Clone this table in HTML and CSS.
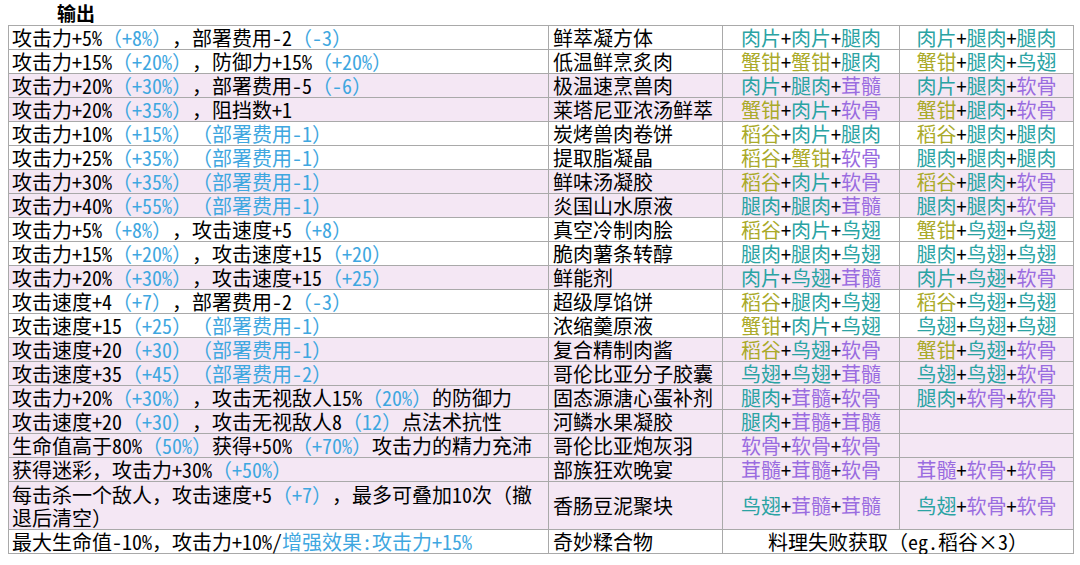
FILE: index.html
```html
<!DOCTYPE html>
<html lang="zh">
<head>
<meta charset="utf-8">
<title>输出</title>
<link rel="stylesheet" href="styles.css">
</head>
<body>
<div class="title">输出</div>
<table class="grid">
<colgroup><col class="c1"><col class="c2"><col class="c3"><col class="c4"></colgroup>
<tbody>
<tr><td class="eff">攻击力+5%<span class="b">（+8%）</span>，部署费用-2<span class="b">（-3）</span></td><td class="nm">鲜萃凝方体</td><td class="rc"><span class="t">肉片</span>+<span class="t">肉片</span>+<span class="t">腿肉</span></td><td class="rc"><span class="t">肉片</span>+<span class="t">腿肉</span>+<span class="t">腿肉</span></td></tr>
<tr><td class="eff">攻击力+15%<span class="b">（+20%）</span>，防御力+15%<span class="b">（+20%）</span></td><td class="nm">低温鲜烹炙肉</td><td class="rc"><span class="o">蟹钳</span>+<span class="o">蟹钳</span>+<span class="t">腿肉</span></td><td class="rc"><span class="o">蟹钳</span>+<span class="t">腿肉</span>+<span class="t">鸟翅</span></td></tr>
<tr class="pk"><td class="eff">攻击力+20%<span class="b">（+30%）</span>，部署费用-5<span class="b">（-6）</span></td><td class="nm">极温速烹兽肉</td><td class="rc"><span class="t">肉片</span>+<span class="t">腿肉</span>+<span class="p">茸髓</span></td><td class="rc"><span class="t">肉片</span>+<span class="t">腿肉</span>+<span class="p">软骨</span></td></tr>
<tr class="pk"><td class="eff">攻击力+20%<span class="b">（+35%）</span>，阻挡数+1</td><td class="nm">莱塔尼亚浓汤鲜萃</td><td class="rc"><span class="o">蟹钳</span>+<span class="t">肉片</span>+<span class="p">软骨</span></td><td class="rc"><span class="o">蟹钳</span>+<span class="t">腿肉</span>+<span class="p">软骨</span></td></tr>
<tr><td class="eff">攻击力+10%<span class="b">（+15%）（部署费用-1）</span></td><td class="nm">炭烤兽肉卷饼</td><td class="rc"><span class="o">稻谷</span>+<span class="t">肉片</span>+<span class="t">腿肉</span></td><td class="rc"><span class="o">稻谷</span>+<span class="t">腿肉</span>+<span class="t">腿肉</span></td></tr>
<tr><td class="eff">攻击力+25%<span class="b">（+35%）（部署费用-1）</span></td><td class="nm">提取脂凝晶</td><td class="rc"><span class="o">稻谷</span>+<span class="o">蟹钳</span>+<span class="p">软骨</span></td><td class="rc"><span class="t">腿肉</span>+<span class="t">腿肉</span>+<span class="t">腿肉</span></td></tr>
<tr class="pk"><td class="eff">攻击力+30%<span class="b">（+35%）（部署费用-1）</span></td><td class="nm">鲜味汤凝胶</td><td class="rc"><span class="o">稻谷</span>+<span class="t">肉片</span>+<span class="p">软骨</span></td><td class="rc"><span class="o">稻谷</span>+<span class="t">腿肉</span>+<span class="p">软骨</span></td></tr>
<tr class="pk"><td class="eff">攻击力+40%<span class="b">（+55%）（部署费用-1）</span></td><td class="nm">炎国山水原液</td><td class="rc"><span class="t">腿肉</span>+<span class="t">腿肉</span>+<span class="p">茸髓</span></td><td class="rc"><span class="t">腿肉</span>+<span class="t">腿肉</span>+<span class="p">软骨</span></td></tr>
<tr><td class="eff">攻击力+5%<span class="b">（+8%）</span>，攻击速度+5<span class="b">（+8）</span></td><td class="nm">真空冷制肉脍</td><td class="rc"><span class="o">稻谷</span>+<span class="t">肉片</span>+<span class="t">鸟翅</span></td><td class="rc"><span class="o">蟹钳</span>+<span class="t">鸟翅</span>+<span class="t">鸟翅</span></td></tr>
<tr><td class="eff">攻击力+15%<span class="b">（+20%）</span>，攻击速度+15<span class="b">（+20）</span></td><td class="nm">脆肉薯条转醇</td><td class="rc"><span class="t">腿肉</span>+<span class="t">腿肉</span>+<span class="t">鸟翅</span></td><td class="rc"><span class="t">腿肉</span>+<span class="t">鸟翅</span>+<span class="t">鸟翅</span></td></tr>
<tr class="pk"><td class="eff">攻击力+20%<span class="b">（+30%）</span>，攻击速度+15<span class="b">（+25）</span></td><td class="nm">鲜能剂</td><td class="rc"><span class="t">肉片</span>+<span class="t">鸟翅</span>+<span class="p">茸髓</span></td><td class="rc"><span class="t">肉片</span>+<span class="t">鸟翅</span>+<span class="p">软骨</span></td></tr>
<tr><td class="eff">攻击速度+4<span class="b">（+7）</span>，部署费用-2<span class="b">（-3）</span></td><td class="nm">超级厚馅饼</td><td class="rc"><span class="o">稻谷</span>+<span class="t">腿肉</span>+<span class="t">鸟翅</span></td><td class="rc"><span class="o">稻谷</span>+<span class="t">鸟翅</span>+<span class="t">鸟翅</span></td></tr>
<tr><td class="eff">攻击速度+15<span class="b">（+25）（部署费用-1）</span></td><td class="nm">浓缩羹原液</td><td class="rc"><span class="o">蟹钳</span>+<span class="t">肉片</span>+<span class="t">鸟翅</span></td><td class="rc"><span class="t">鸟翅</span>+<span class="t">鸟翅</span>+<span class="t">鸟翅</span></td></tr>
<tr class="pk"><td class="eff">攻击速度+20<span class="b">（+30）（部署费用-1）</span></td><td class="nm">复合精制肉酱</td><td class="rc"><span class="o">稻谷</span>+<span class="t">鸟翅</span>+<span class="p">软骨</span></td><td class="rc"><span class="o">蟹钳</span>+<span class="t">鸟翅</span>+<span class="p">软骨</span></td></tr>
<tr class="pk"><td class="eff">攻击速度+35<span class="b">（+45）（部署费用-2）</span></td><td class="nm">哥伦比亚分子胶囊</td><td class="rc"><span class="t">鸟翅</span>+<span class="t">鸟翅</span>+<span class="p">茸髓</span></td><td class="rc"><span class="t">鸟翅</span>+<span class="t">鸟翅</span>+<span class="p">软骨</span></td></tr>
<tr class="pk"><td class="eff">攻击力+20%<span class="b">（+30%）</span>，攻击无视敌人15%<span class="b">（20%）</span>的防御力</td><td class="nm">固态源溏心蛋补剂</td><td class="rc"><span class="t">腿肉</span>+<span class="p">茸髓</span>+<span class="p">软骨</span></td><td class="rc"><span class="t">腿肉</span>+<span class="p">软骨</span>+<span class="p">软骨</span></td></tr>
<tr class="pk"><td class="eff">攻击速度+20<span class="b">（+30）</span>，攻击无视敌人8<span class="b">（12）</span>点法术抗性</td><td class="nm">河鳞水果凝胶</td><td class="rc"><span class="t">腿肉</span>+<span class="p">茸髓</span>+<span class="p">茸髓</span></td><td class="rc"></td></tr>
<tr class="pk"><td class="eff">生命值高于80%<span class="b">（50%）</span>获得+50%<span class="b">（+70%）</span>攻击力的精力充沛</td><td class="nm">哥伦比亚炮灰羽</td><td class="rc"><span class="p">软骨</span>+<span class="p">软骨</span>+<span class="p">软骨</span></td><td class="rc"></td></tr>
<tr class="pk"><td class="eff">获得迷彩，攻击力+30%<span class="b">（+50%）</span></td><td class="nm">部族狂欢晚宴</td><td class="rc"><span class="p">茸髓</span>+<span class="p">茸髓</span>+<span class="p">软骨</span></td><td class="rc"><span class="p">茸髓</span>+<span class="p">软骨</span>+<span class="p">软骨</span></td></tr>
<tr class="pk tall"><td class="eff wrap">每击杀一个敌人，攻击速度+5<span class="b">（+7）</span>，最多可叠加10次（撤<br>退后清空）</td><td class="nm">香肠豆泥聚块</td><td class="rc"><span class="t">鸟翅</span>+<span class="p">茸髓</span>+<span class="p">茸髓</span></td><td class="rc"><span class="t">鸟翅</span>+<span class="p">软骨</span>+<span class="p">软骨</span></td></tr>
<tr><td class="eff">最大生命值-10%，攻击力+10%/<span class="b">增强效果:攻击力+15%</span></td><td class="nm">奇妙糅合物</td><td class="rc" colspan="2">料理失败获取（eg.稻谷×3）</td></tr>
</tbody>
</table>
</body>
</html>
```

FILE: styles.css
```css
html, body {
  margin: 0;
  padding: 0;
  background: #ffffff;
}
body {
  font-family: "Noto Sans Mono CJK SC", "Noto Sans CJK SC", "Liberation Sans", sans-serif;
  color: #000000;
  text-spacing-trim: space-all;
}
.title {
  height: 25px;
  line-height: 25px;
  padding-left: 57px;
  font-size: 19px;
  font-weight: bold;
}
.grid {
  margin-left: 8px;
  border-collapse: collapse;
  table-layout: fixed;
  width: 1065px;
  font-size: 20px;
}
.c1 { width: 540px; }
.c2 { width: 174px; }
.c3 { width: 177px; }
.c4 { width: 174px; }
.grid tr { height: 24px; }
.grid tr.tall { height: 48px; }
.grid td {
  border: 1px solid #a9a9a9;
  padding: 0;
  line-height: 23px;
  white-space: nowrap;
}
.grid td.eff { padding-left: 3px; }
.grid td.nm { padding-left: 4px; }
.grid td.rc { text-align: center; }
.grid td.wrap { line-height: 23px; }
.pk td { background: #f4e7f4; }
.b { color: #3fa7e0; }
.t { color: #2aa3a3; }
.o { color: #aaaa2a; }
.p { color: #9a6ce0; }
```
